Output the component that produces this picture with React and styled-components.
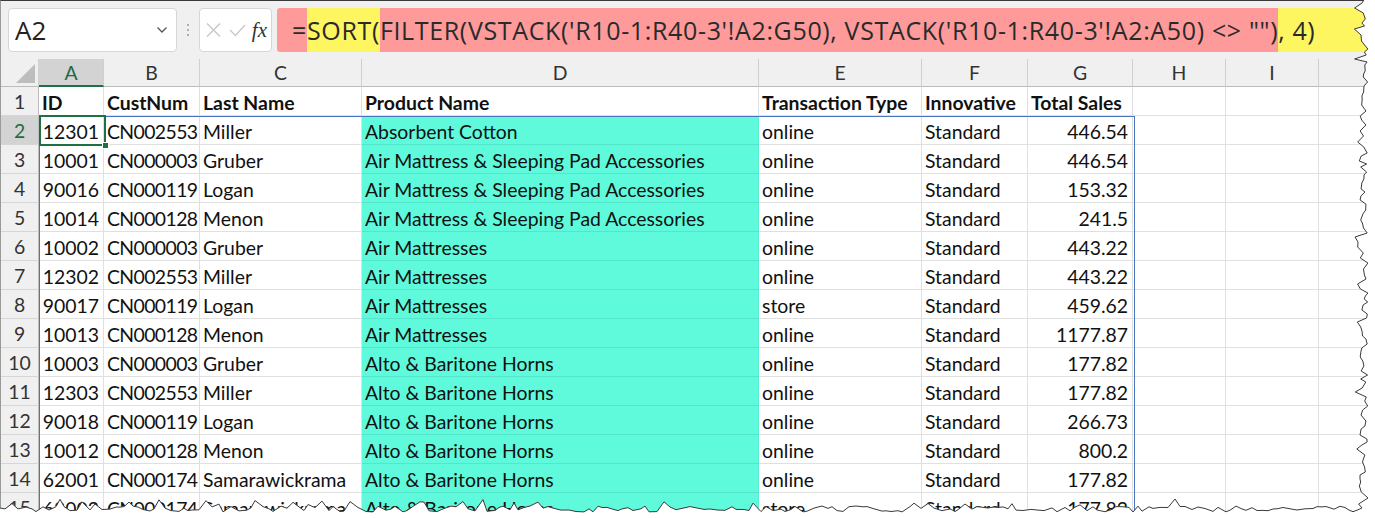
import React from 'react'
import styled, { createGlobalStyle } from 'styled-components'

const Global = createGlobalStyle`
html, body { margin: 0; padding: 0; background: #fff; overflow: hidden; }
`

const CELL_FONT = `"Lato", "Open Sans", sans-serif`
const UI_FONT = `"Open Sans", "Noto Sans", sans-serif`

const Page = styled.div`
position: relative;
width: 1375px;
height: 518px;
overflow: hidden;
background: #fff;
`
const Sheet = styled.div`
display: flex;
flex-direction: column;
height: 100%;
border-top: 1px solid #3a3a3a;
border-left: 1px solid #9a9a9a;
box-sizing: border-box;
`
const Bar = styled.div`
display: flex;
align-items: center;
gap: 5px;
height: 58px;
padding: 7px 0 7px 7px;
box-sizing: border-box;
background: #f0f0f0;
`
const Box = styled.div`
display: flex;
align-items: center;
height: 44px;
box-sizing: border-box;
background: #fff;
border: 1px solid #d6d6d6;
border-radius: 4px;
`
const NameBox = styled(Box)`
width: 169px;
padding: 0 8px 0 6px;
justify-content: space-between;
font-family: ${UI_FONT};
font-size: 26px;
color: #222;
`
const Dots = styled.div`
display: flex;
flex-direction: column;
gap: 3px;
padding: 0 5px;
span { width: 2px; height: 2px; background: #9a9a9a; border-radius: 1px; }
`
const FxBox = styled(Box)`
width: 73px;
padding: 0 4px 0 5px;
justify-content: space-between;
`
const Fx = styled.span`
font-family: "Liberation Serif", serif;
font-style: italic;
font-size: 21px;
color: #333;
`
const Formula = styled.div`
flex: 1;
display: flex;
align-items: center;
height: 44px;
padding-left: 15px;
background: #ff9a9a;
border-radius: 3px 0 0 3px;
font-family: ${UI_FONT};
font-size: 25px;
letter-spacing: 0.65px;
color: #2a2a2a;
white-space: nowrap;
overflow: hidden;
`
const Seg = styled.span`
display: flex;
align-items: center;
height: 100%;
background: ${p => (p.$hl ? '#fdf661' : 'transparent')};
flex: ${p => (p.$grow ? 1 : 'none')};
`
const Grid = styled.div`
position: relative;
display: grid;
grid-template-columns: 38px 65px 96px 162px 397px 163px 106px 105px 93px 93px 1fr;
grid-template-rows: 28px;
grid-auto-rows: 29px;
background: #fff;
font-family: ${CELL_FONT};
font-size: 19.4px;
color: #111;
`
const ColHead = styled.div`
display: flex;
align-items: center;
justify-content: center;
background: ${p => (p.$sel ? '#d3d3d3' : '#f0f0f0')};
color: ${p => (p.$sel ? '#1e6b42' : '#333')};
border-right: 1px solid #d0d0d0;
border-bottom: ${p => (p.$sel ? '2px solid #1e7145' : '1px solid #bdbdbd')};
box-sizing: border-box;
`
const Corner = styled.div`
position: relative;
background: #f0f0f0;
border-right: 1px solid #d0d0d0;
border-bottom: 1px solid #bdbdbd;
&::after {
  content: '';
  position: absolute;
  right: 3px;
  bottom: 3px;
  border-style: solid;
  border-width: 0 0 19px 19px;
  border-color: transparent transparent #bdbdbd transparent;
}
`
const RowHead = styled.div`
display: flex;
align-items: center;
justify-content: center;
background: ${p => (p.$sel ? '#d3d3d3' : '#f0f0f0')};
color: ${p => (p.$sel ? '#1e6b42' : '#333')};
border-right: 1px solid #bdbdbd;
border-bottom: 1px solid #d6d6d6;
box-sizing: border-box;
`
const Cell = styled.div`
display: flex;
align-items: center;
justify-content: ${p => (p.$right ? 'flex-end' : 'flex-start')};
padding: ${p => (p.$right ? '2px 4px 0 2px' : '2px 0 0 3px')};
box-sizing: border-box;
white-space: nowrap;
overflow: visible;
letter-spacing: ${p => (p.$tight ? '-0.6px' : 'normal')};
font-weight: ${p => (p.$bold ? 700 : 400)};
background: ${p => (p.$fill ? '#5ffadc' : 'transparent')};
border-right: 1px solid ${p => (p.$fill ? '#58ecd0' : '#e0e0e0')};
border-bottom: 1px solid ${p => (p.$fill ? '#54e6ca' : '#e0e0e0')};
`
const Spill = styled.div`
position: absolute;
left: 38px;
top: 57px;
width: 1096px;
height: 600px;
box-sizing: border-box;
border: 1px solid #4a76c0;
pointer-events: none;
`
const Active = styled.div`
position: absolute;
left: 38px;
top: 56px;
width: 67px;
height: 31px;
box-sizing: border-box;
border: 2px solid #1e7145;
&::after {
  content: '';
  position: absolute;
  right: -5px;
  bottom: -5px;
  width: 5px;
  height: 5px;
  background: #1e7145;
  border: 1px solid #fff;
}
`
const Torn = styled.svg`
position: absolute;
left: 0;
top: 0;
pointer-events: none;
`

const cols = ['A', 'B', 'C', 'D', 'E', 'F', 'G', 'H', 'I', '']
const rows = [
  ['12301', 'CN002553', 'Miller', 'Absorbent Cotton', 'online', 'Standard', '446.54'],
  ['10001', 'CN000003', 'Gruber', 'Air Mattress & Sleeping Pad Accessories', 'online', 'Standard', '446.54'],
  ['90016', 'CN000119', 'Logan', 'Air Mattress & Sleeping Pad Accessories', 'online', 'Standard', '153.32'],
  ['10014', 'CN000128', 'Menon', 'Air Mattress & Sleeping Pad Accessories', 'online', 'Standard', '241.5'],
  ['10002', 'CN000003', 'Gruber', 'Air Mattresses', 'online', 'Standard', '443.22'],
  ['12302', 'CN002553', 'Miller', 'Air Mattresses', 'online', 'Standard', '443.22'],
  ['90017', 'CN000119', 'Logan', 'Air Mattresses', 'store', 'Standard', '459.62'],
  ['10013', 'CN000128', 'Menon', 'Air Mattresses', 'online', 'Standard', '1177.87'],
  ['10003', 'CN000003', 'Gruber', 'Alto & Baritone Horns', 'online', 'Standard', '177.82'],
  ['12303', 'CN002553', 'Miller', 'Alto & Baritone Horns', 'online', 'Standard', '177.82'],
  ['90018', 'CN000119', 'Logan', 'Alto & Baritone Horns', 'online', 'Standard', '266.73'],
  ['10012', 'CN000128', 'Menon', 'Alto & Baritone Horns', 'online', 'Standard', '800.2'],
  ['62001', 'CN000174', 'Samarawickrama', 'Alto & Baritone Horns', 'online', 'Standard', '177.82'],
  ['62002', 'CN000174', 'Samarawickrama', 'Alto & Baritone Horns', 'store', 'Standard', '177.82'],
]
const heads = ['ID', 'CustNum', 'Last Name', 'Product Name', 'Transaction Type', 'Innovative', 'Total Sales']

// jagged "torn paper" edge
function tornPath() {
  let s = 7
  const rnd = () => { s = (s * 9301 + 49297) % 233280; return s / 233280 }
  const right = []
  for (let y = 0; y <= 506; y += 3 + Math.floor(rnd() * 4)) {
    let x = 1364 + (rnd() - 0.5) * 8
    if (rnd() > 0.85) x -= 6
    right.push([x, y])
  }
  right.push([1362, 508])
  const bottom = []
  for (let x = 1362; x >= 0; x -= 4 + Math.floor(rnd() * 5)) {
    let y = 509 + (rnd() - 0.5) * 6
    if (rnd() > 0.88) y -= 7
    bottom.push([x, y])
  }
  bottom.push([0, 508])
  const pts = [...right, ...bottom]
  const line = pts.map(p => p.map(n => n.toFixed(1)).join(',')).join(' ')
  return { line, fill: `1375,0 ${line} 0,518 1375,518` }
}

function Chevron() {
  return (
    <svg width="12" height="8" viewBox="0 0 12 8">
      <path d="M1.5 1.5 L6 6 L10.5 1.5" fill="none" stroke="#555" strokeWidth="1.3" />
    </svg>
  )
}

function Marks() {
  return (
    <svg width="42" height="16" viewBox="0 0 42 16">
      <path d="M2 1.5 L15 14.5 M15 1.5 L2 14.5" stroke="#c8c8c8" strokeWidth="1.4" />
      <path d="M25 8 L30.5 13.5 L40 3" fill="none" stroke="#c8c8c8" strokeWidth="1.4" />
    </svg>
  )
}

export default function App() {
  const torn = tornPath()
  return (
    <Page>
      <Global />
      <Sheet>
        <Bar>
          <NameBox>A2<Chevron /></NameBox>
          <Dots><span /><span /><span /></Dots>
          <FxBox><Marks /><Fx>fx</Fx></FxBox>
          <Formula>
            <Seg>=</Seg>
            <Seg $hl>SORT(</Seg>
            <Seg>FILTER(VSTACK('R10-1:R40-3'!A2:G50), VSTACK('R10-1:R40-3'!A2:A50) &lt;&gt; "")</Seg>
            <Seg $hl $grow>, 4)</Seg>
          </Formula>
        </Bar>
        <Grid>
          <Corner />
          {cols.map((c, i) => <ColHead key={i} $sel={c === 'A'}>{c}</ColHead>)}
          <RowHead>1</RowHead>
          {heads.map(h => <Cell key={h} $bold>{h}</Cell>)}
          <Cell /><Cell /><Cell />
          {rows.map((r, i) => (
            <React.Fragment key={i}>
              <RowHead $sel={i === 0}>{i + 2}</RowHead>
              {r.map((v, j) => (
                <Cell key={j} $right={j === 0 || j === 6} $fill={j === 3} $tight={j === 1}>{v}</Cell>
              ))}
              <Cell /><Cell /><Cell />
            </React.Fragment>
          ))}
          <Spill />
          <Active />
        </Grid>
      </Sheet>
      <Torn width="1375" height="518" viewBox="0 0 1375 518">
        <polygon points={torn.fill} fill="#fff" />
        <polyline points={torn.line} fill="none" stroke="#3a3a3a" strokeWidth="1" />
      </Torn>
    </Page>
  )
}
